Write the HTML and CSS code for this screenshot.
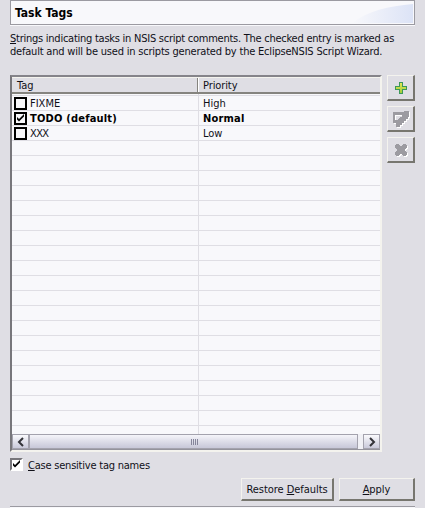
FILE: index.html
```html
<!DOCTYPE html>
<html lang="en">
<head>
<meta charset="utf-8">
<title>Task Tags</title>
<link rel="stylesheet" href="styles.css">
</head>
<body>
<main class="page">
  <header class="title">
    <h1>Task Tags</h1>
    <svg class="swoosh" width="62" height="22" viewBox="0 0 62 22"><defs><linearGradient id="sw"><stop offset="0" stop-color="#f8f8fb"/><stop offset="1" stop-color="#dce3f6"/></linearGradient></defs><path d="M0 22C16 10 36 5 61 3V22Z" fill="url(#sw)"/></svg>
  </header>
  <p class="desc"><span class="l1"><u>S</u>trings indicating tasks in NSIS script comments. The checked entry is marked as</span><span class="l2">default and will be used in scripts generated by the EclipseNSIS Script Wizard.</span></p>
  <div class="content">
    <section class="table">
      <div class="thead"><div class="th tag">Tag</div><div class="th priority">Priority</div></div>
      <div class="rows">
        <div class="row"><div class="cell tag"><span class="box"></span><span>FIXME</span></div><div class="cell">High</div></div>
        <div class="row bold"><div class="cell tag"><span class="box"><svg width="9" height="9" viewBox="0 0 9 9"><path d="M1 3v2.5l2 2 5-5V0L3 5Z" /></svg></span><span>TODO (default)</span></div><div class="cell">Normal</div></div>
        <div class="row"><div class="cell tag"><span class="box"></span><span class="xxx">XXX</span></div><div class="cell">Low</div></div>
      </div>
      <div class="scroll">
        <div class="arrow"><svg width="8" height="10" viewBox="0 0 8 10"><path d="M6 1L2 5l4 4"/></svg></div>
        <div class="thumb"><i></i><i></i><i></i><i></i></div>
        <div class="arrow"><svg width="8" height="10" viewBox="0 0 8 10"><path d="M2 1l4 4-4 4"/></svg></div>
      </div>
    </section>
    <div class="tools">
      <div class="btn tool"><svg width="14" height="14" viewBox="0 0 14 14"><defs><linearGradient id="gr" x2="0" y2="1"><stop offset="0" stop-color="#e8e858"/><stop offset="1" stop-color="#9ccc38"/></linearGradient></defs><path d="M5.5 1.5h3v4h4v3h-4v4h-3v-4h-4v-3h4z" fill="url(#gr)" stroke="#3c985a"/></svg></div>
      <div class="btn tool"><svg width="18" height="18" viewBox="0 0 18 18"><path fill-rule="evenodd" d="M1 2H12V1H17V7H16V9H14V11H12V13H10V15H8V17H4V13H1ZM3 5V10H6V9H7V8H8V7H10V5Z"/></svg></div>
      <div class="btn tool"><svg width="14" height="14" viewBox="0 0 14 14"><path d="M2 1H5V2H6V3H8V2H9V1H12V2H13V5H12V6H11V8H12V9H13V12H12V13H9V12H8V11H6V12H5V13H2V12H1V9H2V8H3V6H2V5H1V2H2Z"/></svg></div>
    </div>
  </div>
  <label class="option"><span class="check"><svg width="9" height="9" viewBox="0 0 9 9"><path d="M1 3v2.5l2 2 5-5V0L3 5Z"/></svg></span><span class="case"><u>C</u>ase sensitive tag names</span></label>
  <div class="actions"><div class="btn restore">Restore <u>D</u>efaults</div><div class="btn apply"><u>A</u>pply</div></div>
  <div class="rule"></div>
</main>
</body>
</html>
```
FILE: styles.css
```css
* { box-sizing: border-box; }
body { margin: 0; height: 508px; overflow: hidden; background: #dfdee4; color: #101018; font: 11px/13px "DejaVu Sans Condensed", "DejaVu Sans", sans-serif; font-stretch: condensed; white-space: nowrap; }
.page { padding: 0 10px; height: 508px; }
svg { display: block; }
u { text-decoration: underline; text-underline-offset: 1px; text-decoration-thickness: 1px; text-decoration-skip-ink: none; }
.title { height: 25px; border: 1px solid #9b9aa1; background: #f8f8fb; display: flex; justify-content: space-between; box-shadow: 0 1px #f8f8fb; }
h1 { margin: 0 0 0 4px; font-size: 12px; line-height: 24px; color: #000; }
.desc { margin: 7px 0 0; height: 43px; }
.desc span { display: block; width: max-content; }
.l1 { letter-spacing: -0.25px; }
.l2 { letter-spacing: -0.2px; }
.case { letter-spacing: -0.22px; }
.content { display: flex; gap: 5px; height: 377px; }
.table { width: 372px; height: 377px; border: 2px solid; border-color: #85848a #f4f3ee #f4f3ee #77767b; background: #f8f8fb; display: flex; flex-direction: column; }
.thead { display: flex; height: 17px; flex: none; border-top: 1px solid #f4f3ee; background: #dfdee4; border-bottom: 2px solid #85847f; }
.th { padding-left: 5px; line-height: 15px; flex: 1; }
.th.tag { border-right: 1px solid #85847f; box-shadow: 1px 0 #fff; }
.priority { letter-spacing: -0.1px; }
.tag { flex: 0 0 186px; }
.rows { flex: 1; padding-top: 2px; background: linear-gradient(#dfdee4, #dfdee4) 186px 0 / 1px 100% no-repeat, repeating-linear-gradient(transparent 0 1px, #dfdee4 1px 2px, transparent 2px 15px); }
.row { height: 15px; display: flex; }
.cell { display: flex; align-items: center; padding-left: 5px; line-height: 15px; }
.cell.tag { padding-left: 2px; gap: 3px; }
.box { width: 13px; height: 13px; border: 2px solid #000; display: flex; }
.bold { font-weight: bold; color: #000; letter-spacing: 0.2px; }
.xxx { letter-spacing: -0.6px; }
.scroll { height: 16px; display: flex; background: #f0f0f5; border-bottom: 1px solid #94939c; }
.arrow { width: 17px; border: 1px solid #a3a2ad; background: linear-gradient(#fafafd, #c9c9da); display: flex; align-items: center; justify-content: center; }
.arrow path { fill: none; stroke: #333338; stroke-width: 2; }
.thumb { width: 329px; margin-right: 5px; padding-left: 2px; border: 1px solid #a3a2ad; background: linear-gradient(#f5f5fa, #dddde8 50%, #c7c7d8); display: flex; align-items: center; justify-content: center; gap: 1px; }
.thumb i { width: 1px; height: 6px; background: #85859a; }
.tools { display: flex; flex-direction: column; gap: 5px; }
.btn { display: flex; align-items: center; justify-content: center; border: solid; border-width: 1px 2px 2px 1px; border-color: #f4f3ee #77766f #77766f #f4f3ee; background: #dfdee4; white-space: pre; letter-spacing: -0.05px; }
.tool { width: 28px; height: 26px; }
.tool svg { shape-rendering: crispEdges; flex: none; margin-left: 1px; }
.tool + .tool svg { fill: #9c9ba1; filter: drop-shadow(1px 1px #fff); }
.option { display: flex; gap: 5px; margin-top: 6px; height: 13px; }
.check { width: 13px; height: 13px; border: 2px solid; border-color: #77767b #fff #fff #77767b; background: #fff; }
.option .case { padding-top: 1px; }
.actions { display: flex; justify-content: flex-end; gap: 5px; margin-top: 7px; }
.restore, .apply { height: 23px; }
.restore { width: 93px; }
.apply { width: 76px; }
.rule { margin-top: 5px; height: 2px; background: #9b9aa1; border-bottom: 1px solid #f8f8fb; }
```
